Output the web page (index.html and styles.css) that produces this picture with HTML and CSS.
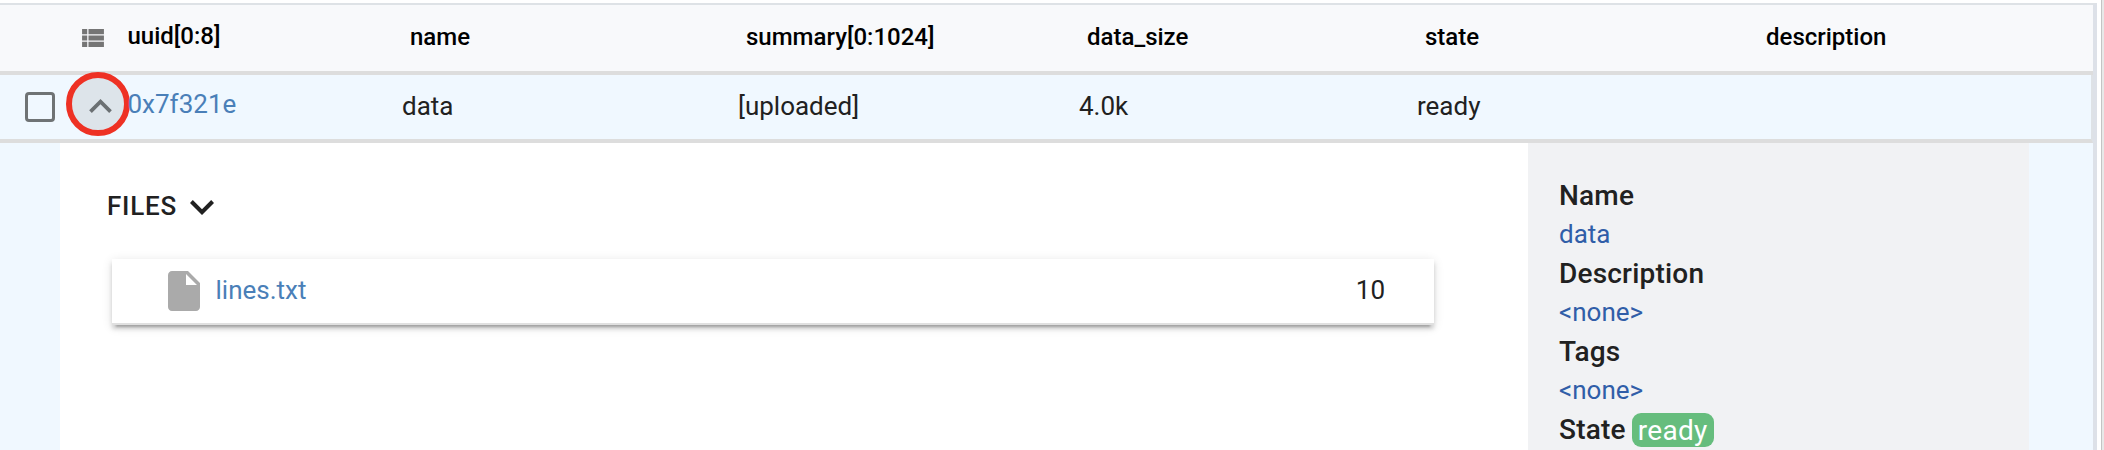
FILE: index.html
```html
<!DOCTYPE html>
<html lang="en">
<head>
<meta charset="utf-8">
<title>Bundles</title>
<link rel="stylesheet" href="styles.css">
</head>
<body>
<div class="page">
  <main class="table">
    <div class="row head">
      <div class="tools"><svg class="list-icon" viewBox="4 5 17 14"><path d="M4 14h4v-4H4v4zm0 5h4v-4H4v4zM4 9h4V5H4v4zm5 5h12v-4H9v4zm0 5h12v-4H9v4zM9 5v4h12V5H9z"/></svg></div>
      <div class="uuid">uuid[0:8]</div>
      <div class="cell">name</div>
      <div class="cell">summary[0:1024]</div>
      <div class="cell">data_size</div>
      <div class="cell">state</div>
      <div class="cell">description</div>
    </div>
    <div class="row body-row">
      <div class="tools">
        <span class="checkbox"></span>
        <span class="toggle"><svg class="up-icon" viewBox="6 8 12 7.41"><path d="M12 8l-6 6 1.41 1.41L12 10.83l4.59 4.58L18 14z"/></svg></span>
      </div>
      <a class="uuid">0x7f321e</a>
      <div class="cell">data</div>
      <div class="cell">[uploaded]</div>
      <div class="cell">4.0k</div>
      <div class="cell">ready</div>
      <div class="cell"></div>
    </div>
    <div class="detail">
      <section class="content">
        <div class="files-title">FILES<svg class="down-icon" viewBox="6 8.59 12 7.41"><path d="M7.41 8.59L12 13.17l4.59-4.58L18 10l-6 6-6-6z"/></svg></div>
        <div class="file">
          <svg class="file-icon" viewBox="4 2 16 20"><path d="M6 2c-1.1 0-1.99.9-1.99 2L4 20c0 1.1.89 2 1.99 2H18c1.1 0 2-.9 2-2V8l-6-6H6zm7 7V3.5L18.500 9H13z"/></svg>
          <a class="file-name">lines.txt</a>
          <span class="file-size">10</span>
        </div>
      </section>
      <aside class="side">
        <div class="label">Name</div>
        <div class="value">data</div>
        <div class="label">Description</div>
        <div class="value">&lt;none&gt;</div>
        <div class="label">Tags</div>
        <div class="value">&lt;none&gt;</div>
        <div class="label state">State<span class="badge">ready</span></div>
      </aside>
    </div>
  </main>
  <div class="scrollbar"></div>
</div>
</body>
</html>
```

FILE: styles.css
```css
* { box-sizing: border-box; }
body {
  margin: 0;
  background: #fff;
  font-family: Roboto, "Liberation Sans", sans-serif;
  font-size: 26px;
  line-height: 39px;
  color: #212121;
}
svg { display: block; fill: currentColor; }
.page { display: flex; height: 450px; overflow: hidden; }
.table {
  flex: none;
  width: 2097px;
  margin-top: 3px;
  border-top: 2px solid #dee2e6;
  border-right: 4px solid #dde1e8;
}
.scrollbar {
  flex: none;
  width: 3px;
  margin-left: 4px;
  border-left: 1px solid #c4c4c4;
  background: #e8e8e8;
}
.row {
  display: grid;
  grid-template-columns: 127.500px 274.500px 336px 341px 338px 341px 1fr;
  border-bottom: 4px solid #ddd;
}
.head {
  height: 70px;
  background: #f8f9fb;
  color: #000;
  font-size: 24px;
  font-weight: 500;
}
.head .cell { padding: 13px 0 0 8px; }
.head .uuid { padding-top: 12px; }
.head .tools { padding: 24px 0 0 82px; color: #757575; }
.list-icon { width: 22px; height: 18px; }
.body-row {
  height: 68px;
  background: #f0f8ff;
  border-right: 2px solid #dee2e6;
}
.body-row .cell { padding-top: 12px; }
.body-row .uuid { padding-top: 10px; }
.body-row .tools { display: flex; color: #6b7073; }
.body-row .uuid, .file-name { color: #4a7fb8; }
.checkbox {
  flex: none;
  width: 30px;
  height: 30px;
  margin: 17px 0 0 25px;
  border: 3px solid #6f7375;
  border-radius: 4px;
}
.toggle {
  flex: none;
  width: 64px;
  height: 64px;
  margin: -3px 0 0 11px;
  padding: 21px 0 0 17px;
  border: 6px solid #ee3124;
  border-radius: 50%;
  background: #dde4ea;
}
.up-icon { width: 23px; height: 14px; }
.detail {
  display: flex;
  height: 307px;
  padding-left: 60px;
  background: #f0f8ff;
}
.content { width: 1468px; padding: 44px 94px 0 47px; background: #fff; }
.files-title {
  display: flex;
  align-items: center;
  gap: 13px;
  height: 39px;
  font-weight: 500;
  letter-spacing: 0.8px;
}
.down-icon { width: 24px; height: 15px; margin-top: 2px; }
.file {
  display: flex;
  align-items: center;
  height: 66px;
  margin: 33px 0 0 5px;
  padding: 0 49px 0 56px;
  border-bottom: 2px solid #e0e0e0;
  background: #fff;
  box-shadow: 0 6px 2px -4px rgba(0,0,0,.2), 0 4px 4px rgba(0,0,0,.14), 0 2px 10px rgba(0,0,0,.12);
}
.file-icon { width: 32px; height: 40px; color: #aaa; }
.file-name { margin-left: 15.500px; margin-bottom: 2px; }
.file-size { margin-left: auto; margin-bottom: 2px; }
.side { width: 501px; padding: 33px 0 0 31px; background: #f1f2f4; }
.label { font-size: 28px; font-weight: 500; height: 39px; letter-spacing: 0.2px; }
.value { color: #305ea8; height: 39px; }
.state { display: flex; align-items: center; gap: 6px; }
.badge {
  height: 34px;
  padding: 0 6px;
  border-radius: 9px;
  background: #66bd7d;
  color: #fff;
  font-weight: 400;
  letter-spacing: 0.3px;
  line-height: 35px;
}
```
